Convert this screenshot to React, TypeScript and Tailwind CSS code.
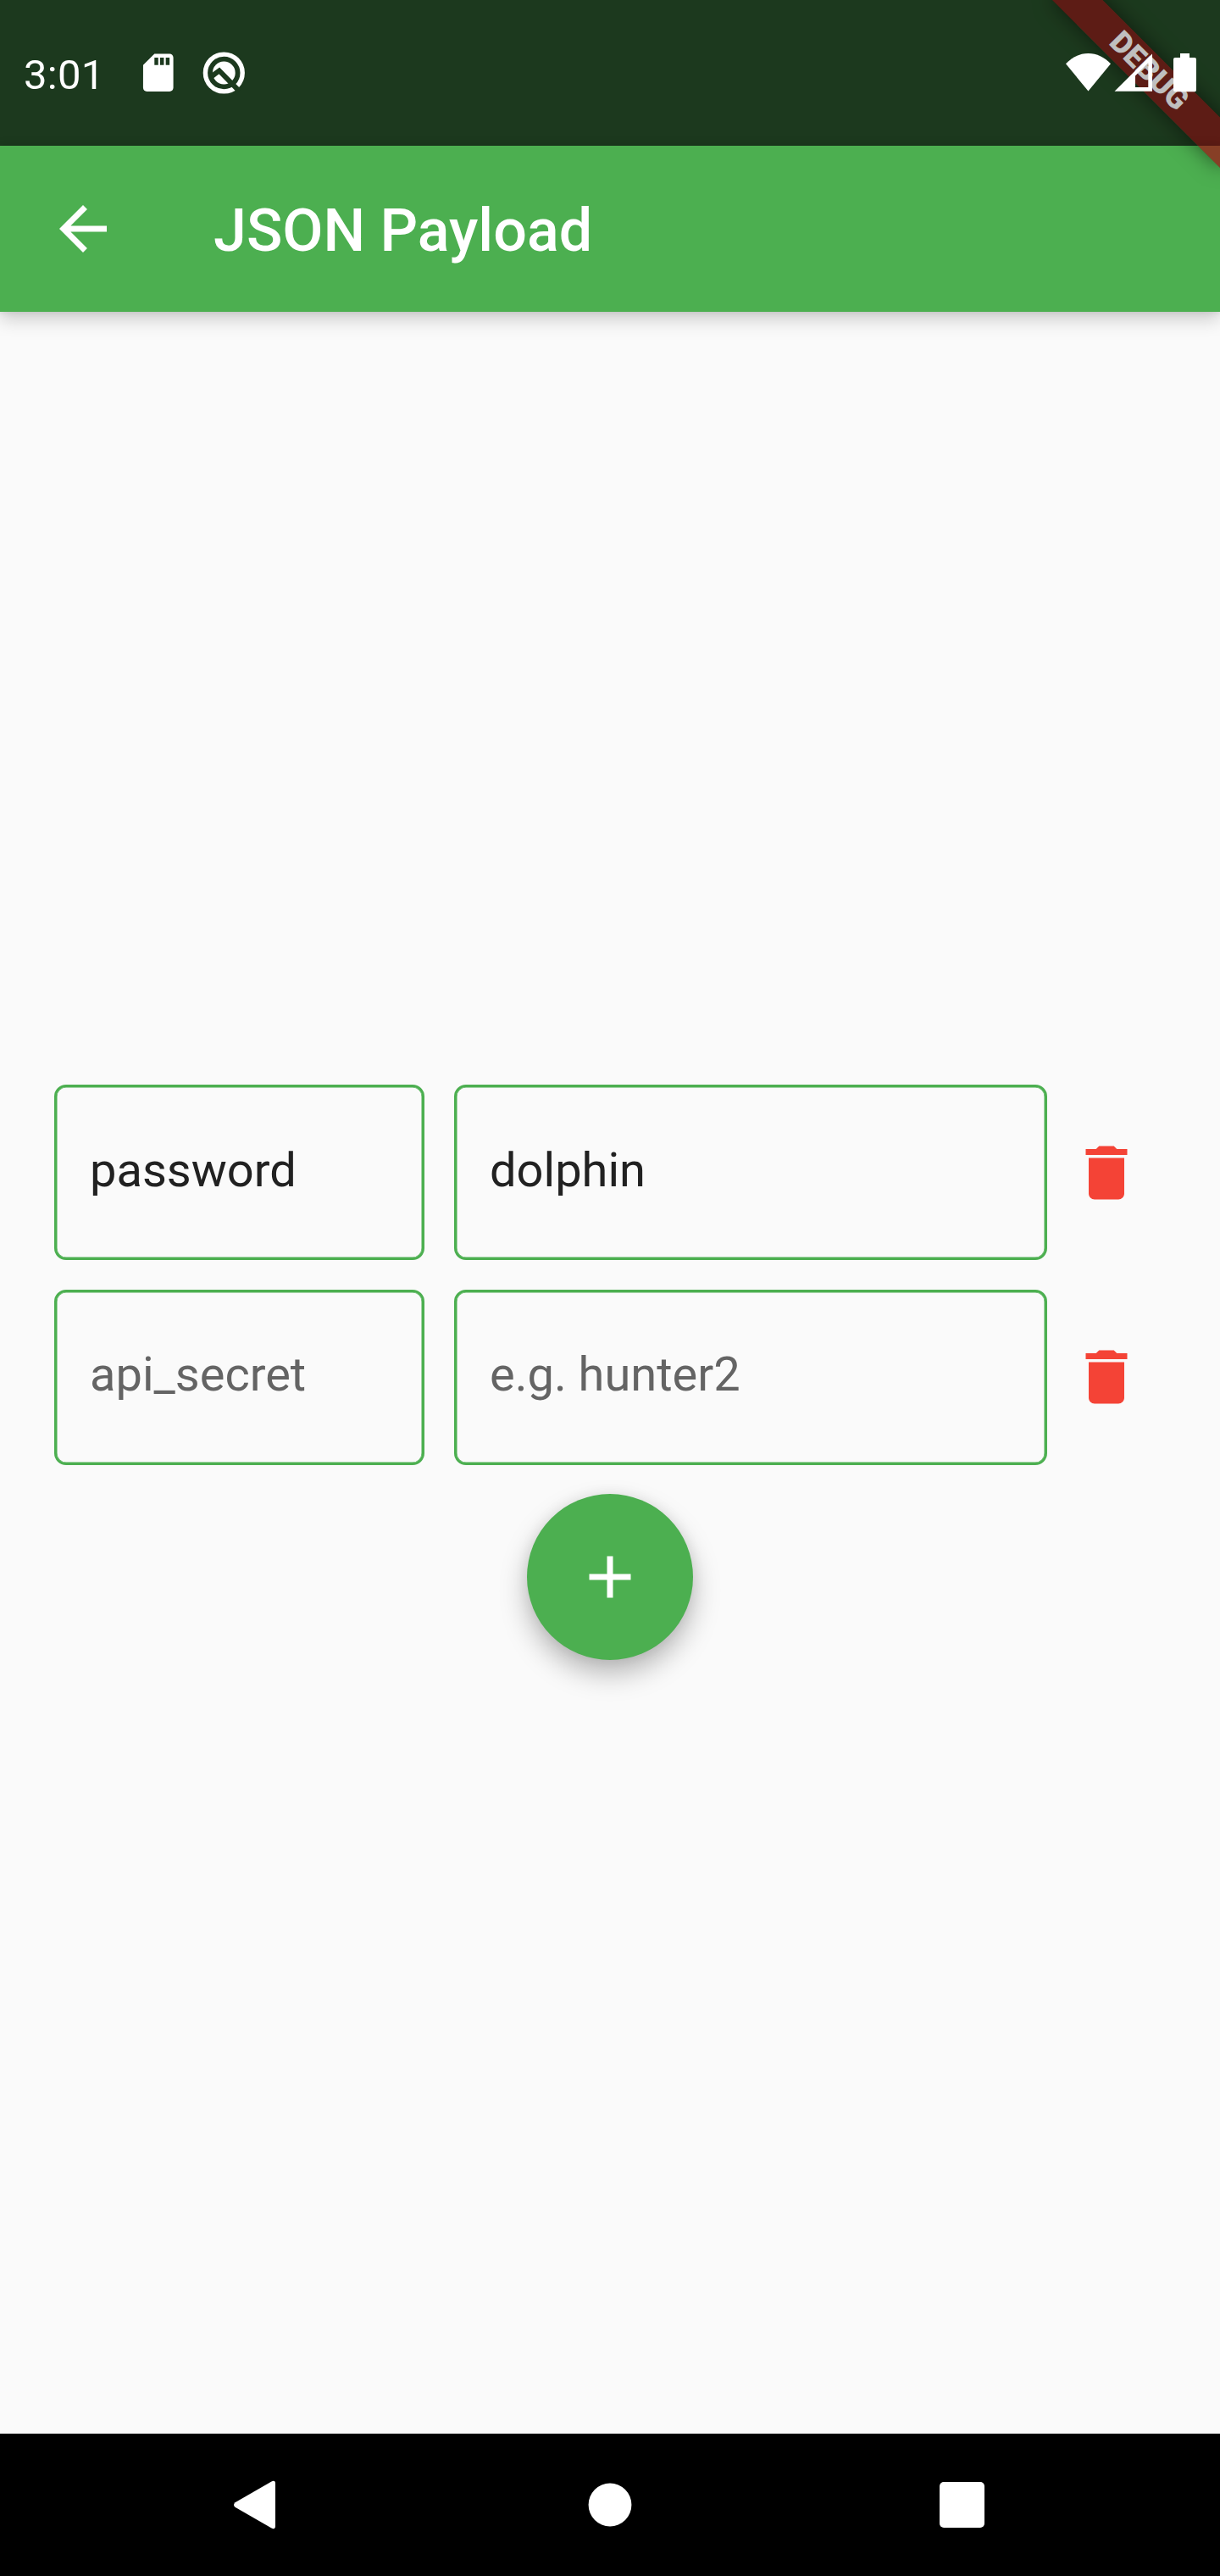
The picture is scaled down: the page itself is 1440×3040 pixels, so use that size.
import React from "react";

function StatusBar() {
  return (
    <div className="relative h-[172px] w-full overflow-hidden bg-[#264d28]">
      <DebugBanner label="DEBUG" />
      <div className="absolute inset-0 bg-black/25" />
      <div className="relative flex h-full items-center justify-between pl-[28px] pr-[28px] text-white">
        <div className="flex h-full items-center">
          <span className="w-[132px] pt-[6px] text-[49px] leading-[58px] tracking-[0.3px]">3:01</span>
          <svg className="h-[53.5px] w-[53.5px]" viewBox="0 0 24 24" fill="currentColor">
            <path d="M18 2h-8L4.02 8 4 20c0 1.1.9 2 2 2h12c1.1 0 2-.9 2-2V4c0-1.1-.9-2-2-2zm-6 6h-2V4h2v4zm3 0h-2V4h2v4zm3 0h-2V4h2v4z" />
          </svg>
          <svg className="ml-[22.5px] h-[56px] w-[56px]" viewBox="0 0 56 56">
            <circle cx="28.3" cy="28" r="21.9" fill="none" stroke="white" strokeWidth="5.4" />
            <circle cx="28.3" cy="28" r="13.4" fill="white" />
            <path d="M14 32l8.8-6.6L46 49.2" fill="none" stroke="#1d3a1e" strokeWidth="6" />
          </svg>
        </div>
        <svg className="h-[50px] w-[156px]" viewBox="1256 61 156 50" fill="currentColor">
          <path d="M1258 75.3C1265.5 67.5 1274.5 63 1284.5 63S1303.5 67.5 1311 75.3L1284.5 107.6z" />
          <path fillRule="evenodd" d="M1315.5 107.7L1360 63.5V107.7zM1340 89.5V103H1355.3V74z" />
          <path d="M1393 63h11v5h6a2 2 0 0 1 2 2v36.3a2 2 0 0 1-2 2h-23a2 2 0 0 1-2-2V70a2 2 0 0 1 2-2h6z" />
        </svg>
      </div>
    </div>
  );
}

/* Corner ribbon: a 280x42 strip turned 45 degrees about the top right corner. */
function DebugBanner({ label }: { label?: string }) {
  return (
    <div className="absolute right-0 top-0 h-0 w-0 rotate-45">
      <div className="absolute -left-[140px] top-[98px] flex h-[42px] w-[280px] items-center justify-center bg-[#9d1818]/74 text-[35.7px] font-black leading-none text-white shadow-[0_0_24px_rgba(0,0,0,0.5)]">
        {label}
      </div>
    </div>
  );
}

function AppBar() {
  return (
    <header className="relative h-[196px] w-full bg-[#4caf50] shadow-[0_9px_20px_rgba(0,0,0,0.18),0_0_7px_rgba(0,0,0,0.12)]">
      <div className="relative flex h-full items-center overflow-hidden pl-[56px] text-white">
        <svg className="h-[84px] w-[84px]" viewBox="0 0 24 24" fill="currentColor">
          <path d="M20 11H7.83l5.59-5.59L12 4l-8 8 8 8 1.41-1.41L7.83 13H20v-2z" />
        </svg>
        <h1 className="ml-[112px] pt-[3px] text-[70px] font-medium leading-[82px]">JSON Payload</h1>
        <div className="absolute right-0 -top-[172px] h-0 w-0">
          <DebugBanner />
        </div>
      </div>
    </header>
  );
}

const field =
  "h-[207px] rounded-[14px] border-[3px] border-[#4caf50] bg-transparent pl-[39px] text-[56px] text-[#212121] outline-none placeholder:text-[#646464] placeholder:opacity-100 shadow-[inset_0_0_0_0.5px_#4caf50]";

function PayloadRow({ name, value }: { name: string; value: string }) {
  const lift = name === "" ? "pb-[7px]" : "pb-[5px]";
  return (
    <div className="flex items-center">
      <input className={`${field} w-[437px] ${lift}`} defaultValue={name} placeholder="api_secret" />
      <input className={`${field} ml-[35px] w-[700px] ${lift}`} defaultValue={value} placeholder="e.g. hunter2" />
      <button className={name === "" ? "ml-[28px] pb-[2px]" : "ml-[28px]"}>
        <svg className="block h-[84px] w-[84px]" viewBox="0 0 24 24" fill="#f44336">
          <path d="M6 19c0 1.1.9 2 2 2h8c1.1 0 2-.9 2-2V7H6v12zM19 4h-3.5l-1-1h-5l-1 1H5v2h14V4z" />
        </svg>
      </button>
    </div>
  );
}

function NavBar() {
  return (
    <nav className="flex h-[168px] w-full items-center justify-center bg-black">
      <div className="flex w-[415px] justify-center">
        <svg className="h-[84px] w-[84px]" viewBox="0 0 84 84" fill="white">
          <path d="M14.5 39.2L57.5 14.4Q62 12.5 62 17V67Q62 71.5 57.5 69.6L14.5 44.8Q11.5 42 14.5 39.2z" />
        </svg>
      </div>
      <div className="flex w-[415px] justify-center">
        <svg className="h-[52px] w-[52px]" viewBox="0 0 52 52" fill="white">
          <circle cx="26" cy="26" r="25.4" />
        </svg>
      </div>
      <div className="flex w-[415px] justify-center">
        <div className="h-[54px] w-[53px] rounded-[5px] bg-white" />
      </div>
    </nav>
  );
}

export default function App() {
  return (
    <div className="flex h-[3040px] w-[1440px] flex-col overflow-hidden bg-[#fafafa] font-[Roboto,sans-serif]">
      <StatusBar />
      <AppBar />
      <main className="flex flex-1 flex-col justify-center gap-[35px] pb-[1px] pl-[64px]">
        <PayloadRow name="password" value="dolphin" />
        <PayloadRow name="" value="" />
        <button className="-mt-[1px] ml-[558px] flex h-[196px] w-[196px] items-center justify-center rounded-full bg-[#4caf50] shadow-[0_16px_32px_rgba(0,0,0,0.27),0_0_16px_rgba(0,0,0,0.07)]">
          <svg className="h-[84px] w-[84px]" viewBox="0 0 24 24" fill="white">
            <path d="M19 13h-6v6h-2v-6H5v-2h6V5h2v6h6v2z" />
          </svg>
        </button>
      </main>
      <NavBar />
    </div>
  );
}
